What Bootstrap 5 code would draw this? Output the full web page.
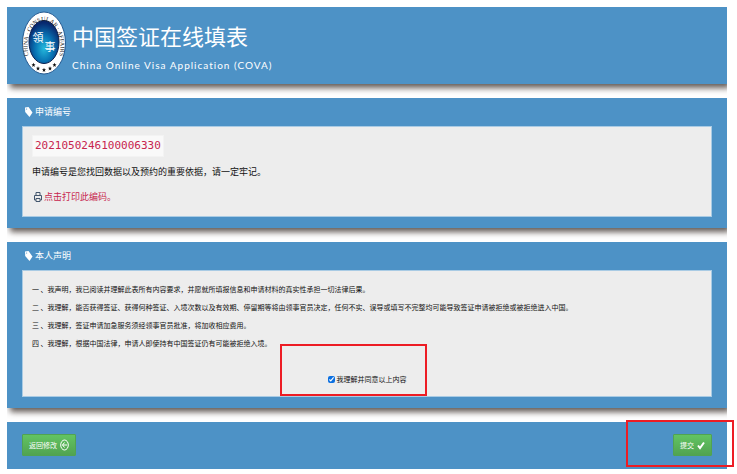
<!DOCTYPE html>
<html lang="zh-CN">
<head>
<meta charset="utf-8">
<meta name="viewport" content="width=device-width, initial-scale=1">
<title>中国签证在线填表</title>
<link href="https://cdn.jsdelivr.net/npm/bootstrap@5.3.0/dist/css/bootstrap.min.css" rel="stylesheet">
<style>
body{background:#fff;color:#222;font:7px/18px "Noto Sans CJK SC",sans-serif}
.page{padding:7px 10px 0 7px}
.stack{gap:14px}
.panel{background:#4d92c6;color:#fff;padding:0 15px;box-shadow:3px 4px 6px rgba(60,50,45,.8);clip-path:inset(0 0 -14px 0)}
.panel-bottom{padding-bottom:11px}
.site-head{height:77px;gap:6px}
.emblem{width:44px;height:64px}
.site-title{font-size:22px;line-height:32px;font-weight:400}
.site-sub{font:10px/14px Lato,"Open Sans",sans-serif;letter-spacing:1px;margin-top:7px}
.panel-title{font-size:9px;line-height:28px;font-weight:400;gap:2px;padding-left:2px}
.well{background:#ededed;color:#111;border:1px solid #a9cbe4;padding:8px 9px}
.app-no{font:11px/20px "DejaVu Sans Mono",monospace;color:#c7254e;background:#f9f9f9;border:1px solid #f3f3f3;padding:0 2px}
.note{font-size:9px;line-height:20px;margin-top:5px}
.print-link{font-size:9px;line-height:18px;color:#c7254e;text-decoration:none;gap:2px;margin:6px 0 2px 2px}
.terms{padding-top:9px}
.agree{gap:2px;margin-top:18px}
.agree input{width:7px;height:9px;margin:0;accent-color:#0b6fe0}
.marker{border:2px solid #ed1c24;pointer-events:none}
.marker-agree{inset:-26px -20px -8px -48px}
.marker-submit{inset:-2px -7px 2px auto;width:108px}
.foot{padding-top:12px;padding-bottom:13px}
.btn-go{font-size:7px;line-height:20px;padding:0 6px;color:#fff;border:1px solid #51a351;border-radius:1px;background:linear-gradient(#62c462,#51a351);gap:3px}
.btn-go:hover{color:#fff;background:#51a351}
</style>
<script src="https://cdn.jsdelivr.net/npm/bootstrap@5.3.0/dist/js/bootstrap.bundle.min.js"></script>
</head>
<body>
<div class="page d-flex flex-column stack">
  <header class="panel site-head d-flex align-items-start">
    <svg class="emblem flex-shrink-0 mt-1" viewBox="0 0 44 64" role="img" aria-label="China Consular Affairs">
      <defs>
        <radialGradient id="globe" cx=".5" cy=".65" r=".6"><stop offset="0" stop-color="#25b9dc"/><stop offset=".5" stop-color="#0874b4"/><stop offset="1" stop-color="#08286e"/></radialGradient>
        <path id="ring" d="M8.500 50A16.500 25.500 0 1 1 35.500 50"/>
        <path id="star" d="M0-2.200.6-.7 2-.7.900.300 1.300 1.900 0 1-1.300 1.900-.900.300-2-.7-.6-.7Z"/>
      </defs>
      <ellipse cx="22" cy="32" rx="21.500" ry="31" fill="#fff" stroke="#255b92"/>
      <ellipse cx="22" cy="31" rx="15" ry="21.500" fill="url(#globe)" stroke="#09204f"/>
      <text font-family="Liberation Serif,serif" font-size="6" fill="#222"><textPath href="#ring" startOffset="50%" text-anchor="middle">CHINA · CONSULAR · AFFAIRS</textPath></text>
      <g fill="#fff" font-family="Noto Sans CJK TC,sans-serif" font-size="11"><text x="10.500" y="31">領</text><text x="22.500" y="40">事</text></g>
      <g fill="#111"><use href="#star" x="11.500" y="54"/><use href="#star" x="16" y="57.500"/><use href="#star" x="22" y="59"/><use href="#star" x="28" y="57.500"/><use href="#star" x="32.500" y="54"/></g>
    </svg>
    <div class="pt-2 mt-1">
      <h1 class="site-title m-0">中国签证在线填表</h1>
      <p class="site-sub mb-0">China Online Visa Application (COVA)</p>
    </div>
  </header>

  <section class="panel panel-bottom">
    <h2 class="panel-title d-flex align-items-center m-0">
      <svg width="9" height="12" viewBox="0 0 9 12" aria-hidden="true"><path d="M1 1.500 4.500 1 8.500 6.500 5.500 11 1.200 6Z" fill="#fff"/><circle cx="2.600" cy="3" r=".6" fill="#4d92c6"/></svg>申请编号</h2>
    <div class="well">
      <div class="d-flex"><code class="app-no">2021050246100006330</code></div>
      <p class="note mb-0">申请编号是您找回数据以及预约的重要依据，请一定牢记。</p>
      <div class="d-flex"><a class="print-link d-flex align-items-center" href="#print">
        <svg width="8" height="10" viewBox="0 0 8 10" fill="none" stroke="#43566d" aria-hidden="true"><path d="M2 4V.5H6V4M2 8H.5V3.500H7.500V8H6M2 6.500H6V9.500H2Z"/></svg>点击打印此编码。</a></div>
    </div>
  </section>

  <section class="panel panel-bottom">
    <h2 class="panel-title d-flex align-items-center m-0">
      <svg width="9" height="12" viewBox="0 0 9 12" aria-hidden="true"><path d="M1 1.500 4.500 1 8.500 6.500 5.500 11 1.200 6Z" fill="#fff"/><circle cx="2.600" cy="3" r=".6" fill="#4d92c6"/></svg>本人声明</h2>
    <div class="well terms">
      <p class="m-0">一 、我声明，我已阅读并理解此表所有内容要求，并愿就所填报信息和申请材料的真实性承担一切法律后果。</p>
      <p class="m-0">二 、我理解，能否获得签证、获得何种签证、入境次数以及有效期、停留期等将由领事官员决定，任何不实、误导或填写不完整均可能导致签证申请被拒绝或被拒绝进入中国。</p>
      <p class="m-0">三 、我理解，签证申请加急服务须经领事官员批准，将加收相应费用。</p>
      <p class="m-0">四 、我理解，根据中国法律，申请人即使持有中国签证仍有可能被拒绝入境。</p>
      <div class="d-flex justify-content-center">
        <div class="agree position-relative d-flex align-items-center">
          <input type="checkbox" id="agree" checked>
          <label for="agree">我理解并同意以上内容</label>
          <span class="marker marker-agree position-absolute"></span>
        </div>
      </div>
    </div>
  </section>

  <footer class="position-relative">
    <div class="panel foot d-flex justify-content-between">
      <button type="button" class="btn btn-go d-flex align-items-center">返回修改
        <svg width="9" height="12" viewBox="0 0 9 12" fill="none" stroke="#fff" aria-hidden="true"><ellipse cx="4.500" cy="6" rx="3.800" ry="5"/><path d="M7 6H2.500M4.500 3.500 2.500 6 4.500 8.500"/></svg></button>
      <button type="submit" class="btn btn-go d-flex align-items-center">提交
        <svg width="8" height="9" viewBox="0 0 8 9" fill="none" stroke="#fff" stroke-width="2" aria-hidden="true"><path d="M1 4.500 3 7 7 1.500"/></svg></button>
    </div>
    <span class="marker marker-submit position-absolute"></span>
  </footer>
</div>
</body>
</html>
